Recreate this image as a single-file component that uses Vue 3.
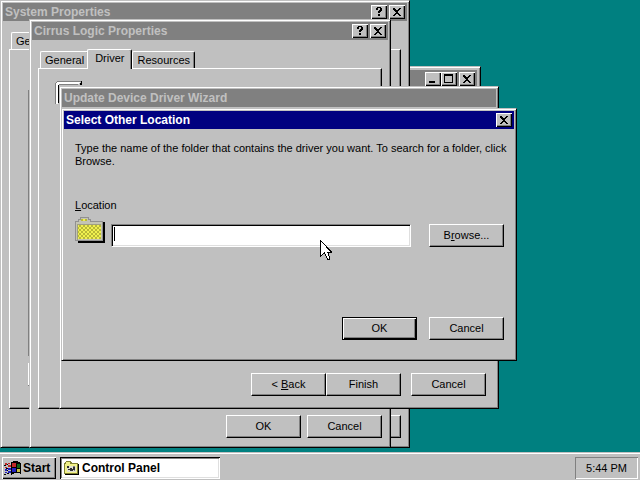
<script setup>
import { ref } from 'vue'

const location = ref('')

const cirrusTabs = [
  { id: 'general', name: 'General' },
  { id: 'driver', name: 'Driver' },
  { id: 'resources', name: 'Resources' }
]
const activeTab = ref('driver')
</script>

<template>
  <div class="screen">
    <svg class="symbols" aria-hidden="true">
      <symbol id="close" viewBox="0 0 12 10" shape-rendering="crispEdges">
        <path d="M2 1h2v1h1v1h2v-1h1v-1h2v1h-1v1h-1v1h-1v1h-1v0h1v1h1v1h1v1h1v1h-2v-1h-1v-1h-2v1h-1v1h-2v-1h1v-1h1v-1h1v-1h-1v-1h-1v-1h-1z" />
      </symbol>
      <symbol id="help" viewBox="0 0 12 10" shape-rendering="crispEdges">
        <path d="M4 0h4v1h1v3h-1v1h-1v1h-2v-2h1v-1h1v-2h-2v2h-2v-2h1zM5 7h2v2h-2z" />
      </symbol>
    </svg>

    <main class="desktop">
      <section class="window control-panel">
        <header class="titlebar">
          <span class="caption"></span>
          <button class="cap" aria-label="Minimize">
            <svg viewBox="0 0 12 10" shape-rendering="crispEdges"><path d="M2 7h6v2h-6z" /></svg>
          </button>
          <button class="cap" aria-label="Maximize">
            <svg viewBox="0 0 12 10" shape-rendering="crispEdges"><path fill-rule="evenodd" d="M1 0h9v9h-9zM2 2v6h7v-6z" /></svg>
          </button>
          <button class="cap -close" aria-label="Close"><svg><use href="#close" /></svg></button>
        </header>
      </section>

      <section class="window system">
        <header class="titlebar">
          <span class="caption">System Properties</span>
          <button class="cap" aria-label="Help"><svg><use href="#help" /></svg></button>
          <button class="cap -close" aria-label="Close"><svg><use href="#close" /></svg></button>
        </header>
        <div class="sheet">
          <div class="tabs"><button class="tab">General</button></div>
          <div class="pane system-pane">
            <div class="group"></div>
            <button class="btn" aria-label="Details"></button>
          </div>
          <footer class="actions"><button class="btn" aria-label="Cancel"></button></footer>
        </div>
      </section>

      <section class="window cirrus">
        <header class="titlebar">
          <span class="caption">Cirrus Logic Properties</span>
          <button class="cap" aria-label="Help"><svg><use href="#help" /></svg></button>
          <button class="cap -close" aria-label="Close"><svg><use href="#close" /></svg></button>
        </header>
        <div class="sheet">
          <div class="tabs">
            <button
              v-for="tab in cirrusTabs"
              :key="tab.id"
              :class="['tab', { '-active': tab.id === activeTab }]"
              @click="activeTab = tab.id"
            >{{ tab.name }}</button>
          </div>
          <div class="pane cirrus-pane">
            <svg class="device" width="30" height="26" viewBox="0 0 30 26" shape-rendering="crispEdges" aria-hidden="true">
              <path d="M2 0h24v1h-24zM1 1h1v1h-1zM0 2h1v21h-1z" fill="#808080" />
              <path d="M2 1h23v1h-1v1h-20v1h-1v19h-2v-21h1z" fill="#fff" />
              <path d="M4 3h19v1h-19z" fill="#808080" />
              <path d="M26 0h1v4h-1zM25 2h1v2h-1zM3 4h1v18h-1z" fill="#000" />
            </svg>
          </div>
          <footer class="actions">
            <button class="btn">OK</button>
            <button class="btn">Cancel</button>
          </footer>
        </div>
      </section>

      <section class="window wizard">
        <header class="titlebar">
          <span class="caption">Update Device Driver Wizard</span>
        </header>
        <footer class="wizard-actions">
          <button class="btn">&lt; <u>B</u>ack</button>
          <button class="btn">Finish</button>
          <button class="btn -apart">Cancel</button>
        </footer>
      </section>

      <section class="window select" role="dialog" aria-labelledby="select-title">
        <header class="titlebar -active">
          <span id="select-title" class="caption">Select Other Location</span>
          <button class="cap -close" aria-label="Close"><svg><use href="#close" /></svg></button>
        </header>
        <form class="form" @submit.prevent>
          <p>Type the name of the folder that contains the driver you want. To search for a folder, click Browse.</p>
          <label for="location"><u>L</u>ocation</label>
          <div class="field">
            <svg width="30" height="26" viewBox="0 0 30 26" shape-rendering="crispEdges" aria-hidden="true">
              <defs>
                <pattern id="check" width="4" height="4" patternUnits="userSpaceOnUse">
                  <path d="M0 0h4v4h-4z" fill="#f0f050" />
                  <path d="M0 0h2v2h-2zM2 2h2v2h-2z" fill="#b8b838" />
                </pattern>
              </defs>
              <path d="M3 5h27v21h-27z" fill="#000" />
              <path d="M0 4h3v-2h2v-2h9v2h2v2h12v20h-28z" fill="#909090" />
              <path d="M1 5h3v-2h2v-2h7v2h2v2h12v18h-26z" fill="#c4c4b4" />
              <path d="M3 7h23v15h-23zM6 2h6v2h-6z" fill="url(#check)" />
              <path d="M3 7h23v1h-23zM2 7h1v16h-1z" fill="#a0a080" />
            </svg>
            <input id="location" v-model="location" type="text" autofocus>
            <span class="caret"></span>
            <button type="button" class="btn">B<u>r</u>owse...</button>
          </div>
          <footer class="form-actions">
            <button class="btn -default">OK</button>
            <button type="button" class="btn">Cancel</button>
          </footer>
        </form>
      </section>

      <svg class="pointer" width="12" height="20" viewBox="0 0 12 20" shape-rendering="crispEdges" aria-hidden="true">
        <path d="M0.5 0.5v16l4-4 3 6.500h2v-2l-2-5h4z" fill="#fff" stroke="#000" />
      </svg>
    </main>

    <nav class="taskbar">
      <button class="start">
        <svg width="18" height="16" viewBox="0 0 18 16" shape-rendering="crispEdges" aria-hidden="true">
          <path d="M7 2l3-1h3l4 2v11l-3-1h-3l-4 2z" fill="#000" />
          <path d="M8 3h4v4h-4z" fill="#c02828" />
          <path d="M13 4h3v4h-3z" fill="#106018" />
          <path d="M8 8h4v4h-4z" fill="#2020c0" />
          <path d="M13 9h3v3h-3z" fill="#c8c048" />
          <path d="M1 3h2v2h-2zM4 3h2v1h-2zM4 5h3v2h-3zM1 7h2v1h-2z" fill="#c02828" />
          <path d="M1 9h2v2h-2zM4 8h3v2h-3zM4 11h3v2h-3zM1 12h2v1h-2z" fill="#2020c0" />
          <path d="M0 5h2v1h-2zM2 8h2v1h-2zM3 4h1v1h-1zM3 10h1v1h-1zM0 14h2v1h-2zM3 13h2v1h-2z" fill="#000" />
        </svg>
        Start
      </button>
      <button class="task">
        <svg width="16" height="14" viewBox="0 0 16 14" shape-rendering="crispEdges" aria-hidden="true">
          <path d="M1 2h1v-1h5v1h1v1h7v11h-14z" fill="#000" />
          <path d="M0 2h1v-1h1v-1h5v1h1v1h6v11h-14z" fill="#808030" />
          <path d="M1 3h1v-2h4v2h7v9h-12z" fill="#f0f088" />
          <path d="M3 5h9v6h-9z" fill="#e0e0d0" />
          <path d="M3 5h2v2h-2zM6 7h2v1h1v-2h2v3h-2v1h-3zM4 8h2v1h-2z" fill="#303030" />
          <path d="M9 5h2v1h-2zM10 9h1v1h-1z" fill="#808080" />
        </svg>
        Control Panel
      </button>
      <time class="clock">5:44 PM</time>
    </nav>
  </div>
</template>

<style>
body {
  margin: 0;
}
</style>

<style scoped>
.screen {
  display: flex;
  flex-direction: column;
  height: 100vh;
  overflow: hidden;
  background: #008080;
  color: #000;
  font-family: "Liberation Sans", Arial, sans-serif;
  font-size: 11px;
  line-height: 13px;
}

.screen * {
  box-sizing: border-box;
}

.symbols {
  position: absolute;
  width: 0;
  height: 0;
}

.desktop {
  position: relative;
  flex: 1;
}

button {
  margin: 0;
  padding: 0;
  border: 0;
  border-radius: 0;
  background: #c0c0c0;
  color: #000;
  font: inherit;
}

u {
  text-underline-offset: 1px;
}

.window {
  position: absolute;
  display: flex;
  flex-direction: column;
  padding: 2px;
  border: 1px solid;
  border-color: #c0c0c0 #000 #000 #c0c0c0;
  background: #c0c0c0;
  box-shadow: inset 1px 1px #fff, inset -1px -1px #808080;
}

.control-panel {
  left: 200px;
  top: 66px;
  width: 281px;
  height: 240px;
  padding: 3px;
}

.system {
  left: 0;
  top: 0;
  width: 410px;
  height: 448px;
}

.cirrus {
  left: 29px;
  top: 19px;
  width: 362px;
  height: 429px;
}

.wizard {
  left: 59px;
  top: 86px;
  width: 440px;
  height: 323px;
}

.select {
  left: 61px;
  top: 108px;
  width: 456px;
}

.titlebar {
  display: flex;
  align-items: center;
  height: 18px;
  padding: 0 2px;
  background: #808080;
  color: #c0c0c0;
  font-weight: bold;

  &.-active {
    background: #000080;
    color: #fff;
  }
}

.caption {
  flex: 1;
  font-size: 12px;
  white-space: nowrap;
}

.cap {
  display: flex;
  width: 16px;
  height: 14px;
  padding: 2px;
  box-shadow: inset 1px 1px #fff, inset -1px -1px #000, inset -2px -2px #808080;

  &.-close {
    margin-left: 2px;
  }

  & svg {
    width: 12px;
    height: 10px;
  }
}

.sheet {
  display: flex;
  flex: 1;
  flex-direction: column;
  padding: 9px 6px 7px;
}

.tabs {
  display: flex;
  align-items: flex-end;
  height: 19px;
  padding-left: 2px;
}

.tab {
  height: 17px;
  padding: 0 4px;
  border: 1px solid;
  border-color: #fff #000 transparent #fff;
  border-bottom: 0;
  border-radius: 2px 2px 0 0;
  box-shadow: inset -1px 0 #808080;

  &.-active {
    position: relative;
    height: 20px;
    margin: 0 0 -1px -2px;
    padding: 0 7px 3px;
  }
}

.pane {
  flex: 1;
  border: 1px solid;
  border-color: #fff #000 #000 #fff;
  box-shadow: inset -1px -1px #808080;
}

.system-pane {
  padding: 40px 18px 18px;
}

.group {
  height: 266px;
  margin-bottom: 7px;
  border: 1px solid #808080;
}

.cirrus-pane {
  padding: 12px 16px;
}

.actions {
  display: flex;
  justify-content: flex-end;
  gap: 6px;
  padding-top: 6px;
}

.btn {
  width: 75px;
  height: 23px;
  border: 1px solid;
  border-color: #fff #000 #000 #fff;
  box-shadow: inset -1px -1px #808080;

  &.-default {
    border-color: #000;
    box-shadow: inset 1px 1px #fff, inset -1px -1px #000, inset -2px -2px #808080;
  }

  &.-apart {
    margin-left: 10px;
  }
}

.wizard-actions {
  display: flex;
  flex: 1;
  align-items: flex-end;
  justify-content: flex-end;
  padding: 10px;
}

.form {
  display: flex;
  flex-direction: column;
  padding: 13px 0 18px 11px;
}

.form p {
  margin: 0 0 31px;
}

.field {
  position: relative;
  display: flex;
  align-items: flex-end;
  height: 30px;
  margin: 5px 10px 70px 0;

  & svg {
    align-self: flex-start;
  }

  & input {
    flex: 1;
    min-width: 0;
    height: 23px;
    margin: 0 18px 0 6px;
    padding: 2px 3px;
    border: 1px solid;
    border-color: #808080 #fff #fff #808080;
    border-radius: 0;
    outline: 0;
    background: #fff;
    box-shadow: inset 1px 1px #000, inset -1px -1px #dfdfdf;
    caret-color: transparent;
    font: inherit;
  }
}

.caret {
  position: absolute;
  left: 39px;
  top: 10px;
  width: 1px;
  height: 14px;
  background: #000;
}

.form-actions {
  display: flex;
  justify-content: flex-end;
  gap: 12px;
  padding-right: 10px;
}

.pointer {
  position: absolute;
  left: 320px;
  top: 240px;
}

.taskbar {
  display: flex;
  gap: 4px;
  height: 28px;
  padding: 4px 2px 2px;
  border-top: 1px solid #c0c0c0;
  background: #c0c0c0;
  box-shadow: inset 0 1px #fff;
  font-size: 12px;
}

.start,
.task {
  display: flex;
  align-items: center;
  height: 22px;
  font-weight: bold;
}

.start {
  gap: 1px;
  width: 54px;
  padding-left: 2px;
  box-shadow: inset 1px 1px #fff, inset -1px -1px #000, inset -2px -2px #808080;
}

.task {
  gap: 2px;
  width: 160px;
  padding-left: 4px;
  background: #fff;
  box-shadow: inset 1px 1px #000, inset -1px -1px #fff, inset 2px 2px #808080, inset -2px -2px #dfdfdf;
}

.clock {
  width: 63px;
  height: 22px;
  margin-left: auto;
  font-size: 11px;
  line-height: 23px;
  text-align: center;
  box-shadow: inset 1px 1px #808080, inset -1px -1px #fff;
}
</style>
